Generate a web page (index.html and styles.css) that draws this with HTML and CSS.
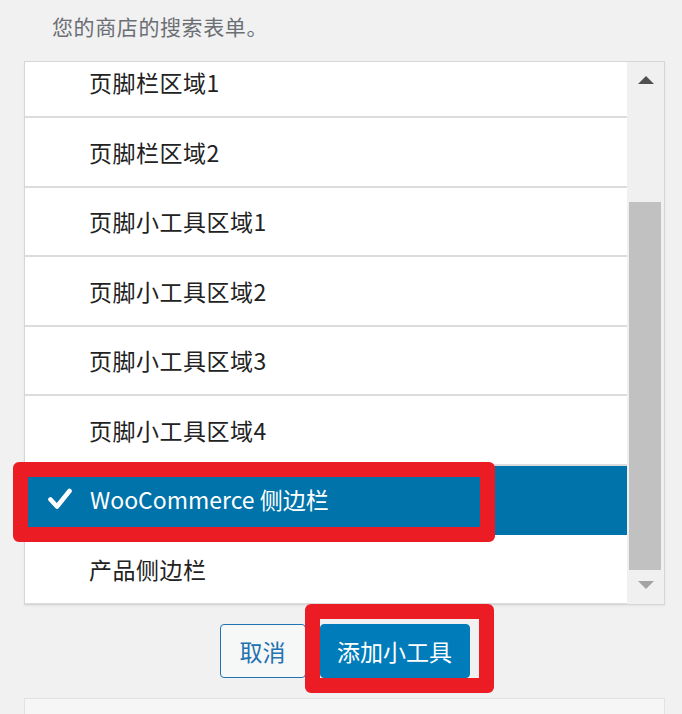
FILE: index.html
```html
<!DOCTYPE html>
<html lang="zh-CN">
<head>
<meta charset="utf-8">
<title>添加小工具</title>
<link rel="stylesheet" href="styles.css">
</head>
<body>
<div class="page">
  <p class="desc">您的商店的搜索表单。</p>
  <div class="listbox">
    <ul class="list">
      <li class="row">页脚栏区域1</li>
      <li class="row">页脚栏区域2</li>
      <li class="row">页脚小工具区域1</li>
      <li class="row">页脚小工具区域2</li>
      <li class="row">页脚小工具区域3</li>
      <li class="row">页脚小工具区域4</li>
      <li class="row selected">
        <svg class="check" viewBox="0 0 24 22" width="24" height="22"><path d="M2.5 11.5 L9 18.5 L21.5 3" fill="none" stroke="#fff" stroke-width="4.6" stroke-linecap="round" stroke-linejoin="round"/></svg>
        WooCommerce 侧边栏
      </li>
      <li class="row">产品侧边栏</li>
    </ul>
    <div class="scrollbar">
      <span class="arrow up"></span>
      <div class="track"><div class="thumb"></div></div>
      <span class="arrow down"></span>
    </div>
  </div>
  <div class="actions">
    <button class="btn cancel">取消</button>
    <button class="btn primary">添加小工具</button>
  </div>
  <div class="next-box"></div>

  <div class="mark mark-row"></div>
  <div class="mark mark-btn"></div>
</div>
</body>
</html>
```

FILE: styles.css
```css
html, body {
  margin: 0;
  padding: 0;
  background: #f1f1f1;
  font-family: "Noto Sans CJK SC", "Noto Sans", sans-serif;
  color: #1e1e1e;
}

.page {
  position: relative;
  padding: 0 17px 0 24px;
  height: 714px;
  overflow: hidden;
}

.desc {
  margin: 0;
  padding: 12px 0 0 28px;
  height: 61px;
  box-sizing: border-box;
  font-size: 21px;
  letter-spacing: 0.6px;
  line-height: 28px;
  color: #6b6f74;
}

.listbox {
  display: flex;
  height: 544px;
  box-sizing: border-box;
  border: 1px solid #d6d6d6;
  background: #fff;
  box-shadow: 0 1px 2px rgba(0,0,0,0.06);
  overflow: hidden;
}

.list {
  list-style: none;
  margin: -13.5px 0 0 0;
  padding: 0;
  flex: 1;
}

.row {
  display: flex;
  align-items: center;
  height: 69.5px;
  box-sizing: border-box;
  padding-left: 64px;
  border-bottom: 2px solid #dcdcde;
  font-size: 23px;
  letter-spacing: 0.5px;
  color: #222;
}

.row.selected {
  background: #0073aa;
  color: #fff;
  padding-left: 23px;
  gap: 18px;
  letter-spacing: 0;
  border-bottom-color: #0073aa;
}

.check { flex: none; }

.scrollbar {
  width: 37px;
  flex: none;
  background: #f0f0f0;
  display: flex;
  flex-direction: column;
  align-items: center;
}

.arrow {
  width: 0;
  height: 0;
  border-left: 8px solid transparent;
  border-right: 8px solid transparent;
}
.arrow.up {
  margin-top: 14px;
  border-bottom: 8px solid #505050;
}
.arrow.down {
  margin: 11px 0 15px;
  border-top: 8px solid #a3a3a3;
}

.track {
  flex: 1;
  align-self: stretch;
  display: flex;
  flex-direction: column;
  justify-content: flex-end;
  padding: 0 3px 0 2px;
}
.thumb {
  height: 368px;
  background: #c1c1c1;
}

.actions {
  display: flex;
  justify-content: center;
  gap: 14px;
  margin-top: 19px;
}

.btn {
  height: 54px;
  box-sizing: border-box;
  border-radius: 4px;
  font-family: "Noto Sans CJK SC", "Noto Sans", sans-serif;
  font-size: 23px;
  padding: 0;
  cursor: pointer;
}
.btn.cancel {
  width: 86px;
  border: 1px solid #2271b1;
  background: #f6f7f7;
  color: #2271b1;
}
.btn.primary {
  width: 150px;
  border: 1px solid #007cba;
  background: #007cba;
  color: #fff;
}

.next-box {
  margin-top: 20px;
  height: 40px;
  border: 1px solid #e2e2e2;
  background: #f6f6f6;
}

.mark {
  position: absolute;
  border-style: solid;
  border-color: #ec1c24;
  border-radius: 6px;
  box-sizing: border-box;
}
.mark-row {
  left: 13px;
  top: 462px;
  width: 482px;
  height: 80px;
  border-width: 15px;
}
.mark-btn {
  left: 305px;
  top: 604px;
  width: 189px;
  height: 89px;
  border-width: 15px;
}
```
